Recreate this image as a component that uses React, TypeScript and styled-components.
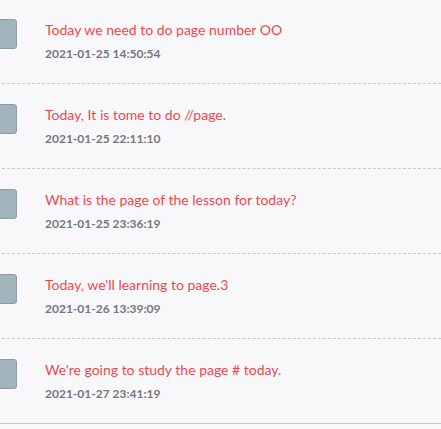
import React from 'react'
import styled, { createGlobalStyle } from 'styled-components'

const GlobalStyle = createGlobalStyle`
  html, body {
    margin: 0;
    padding: 0;
    background: #f8f8fa;
    overflow: hidden;
  }
`

const posts = [
  { title: 'Today we need to do page number OO', date: '2021-01-25 14:50:54' },
  { title: 'Today, It is tome to do //page.', date: '2021-01-25 22:11:10' },
  { title: 'What is the page of the lesson for today?', date: '2021-01-25 23:36:19' },
  { title: "Today, we'll learning to page.3", date: '2021-01-26 13:39:09' },
  { title: "We're going to study the page # today.", date: '2021-01-27 23:41:19' },
]

const App = () => {
  return <Page>
    <GlobalStyle />
    <List>
      {posts.map((post, i) => (
        <Item key={i} last={i === posts.length - 1}>
          <Thumb />
          <TextBox>
            <Title>{post.title}</Title>
            <DateText>{post.date}</DateText>
          </TextBox>
        </Item>
      ))}
    </List>
  </Page>
}

export default App

const Page = styled.div`
  width: 441px;
  height: 429px;
  background: #f8f8fa;
  overflow: hidden;
`

const List = styled.ul`
  list-style: none;
  margin: -1px 0 0 -23px;
  padding: 0;
`

const Item = styled.li<{ last?: boolean }>`
  display: flex;
  align-items: flex-start;
  gap: 28px;
  height: 85px;
  padding-top: 20px;
  box-sizing: border-box;
  border-bottom: 1px ${p => (p.last ? 'solid #c6c6ca' : 'dashed #cacace')};
`

const Thumb = styled.div`
  flex: none;
  width: 40px;
  height: 30px;
  box-sizing: border-box;
  background: #a4b4bd;
  border: 1px solid #8d9ca6;
  border-radius: 3px;
`

const TextBox = styled.div`
  display: flex;
  flex-direction: column;
  gap: 7px;
`

const Title = styled.span`
  font-family: 'Lato', sans-serif;
  font-weight: 400;
  font-size: 14px;
  line-height: 18px;
  margin-top: 2px;
  color: #f0474f;
`

const DateText = styled.span`
  font-family: 'Lato', sans-serif;
  font-weight: 700;
  font-size: 12px;
  line-height: 15px;
  color: #77767f;
`
